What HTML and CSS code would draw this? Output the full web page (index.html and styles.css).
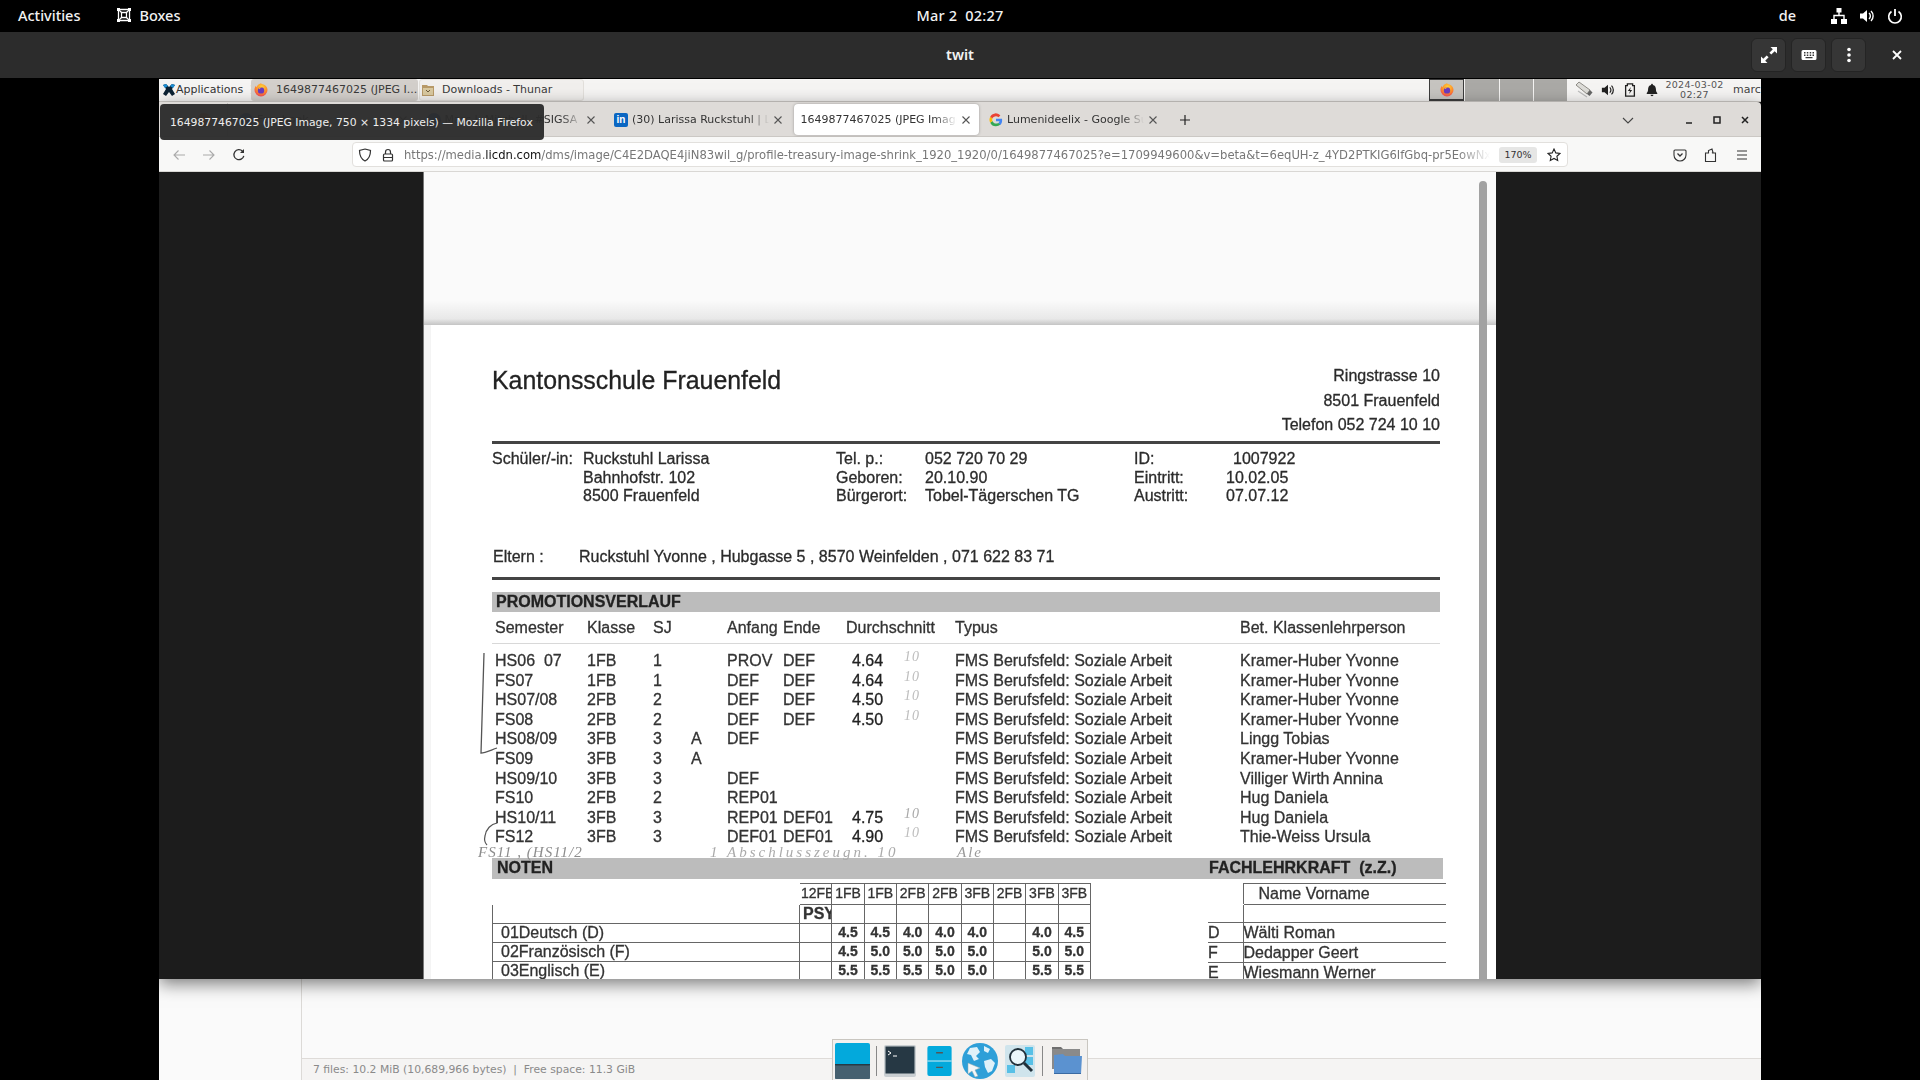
FILE: index.html
```html
<!DOCTYPE html>
<html lang="de">
<head>
<meta charset="utf-8">
<title>twit</title>
<link rel="stylesheet" href="styles.css">
</head>
<body>
<svg class="defs" width="0" height="0" aria-hidden="true">
  <defs>
    <radialGradient id="ffg" cx="0.55" cy="0.3" r="0.8">
      <stop offset="0" stop-color="#ffd83a"/><stop offset="0.55" stop-color="#ff8a2a"/><stop offset="1" stop-color="#f0306a"/>
    </radialGradient>
    <symbol id="ff" viewBox="0 0 16 16">
      <path d="M8 1.2c.4.9 1.4 1 2.6 1.3 1.9.6 3.9 2.6 3.9 5.5A6.5 6.5 0 0 1 1.500 8c0-1.700.5-3 1.300-4l.7 1.200C4 3.300 5.800 1.900 8 1.200z" fill="url(#ffg)"/>
      <circle cx="8" cy="8.400" r="3.200" fill="#6b3bbf"/>
      <path d="M5.300 6.500c1-1.600 3.400-1.700 4.600-.6-1.400-.3-2.700.1-3.100 1.200z" fill="#ffb13a"/>
    </symbol>
    <symbol id="close" viewBox="0 0 10 10"><path d="M1.500 1.500l7 7M8.500 1.500l-7 7" fill="none" stroke="currentColor" stroke-width="1.100"/></symbol>
  </defs>
</svg>

<header class="topbar">
  <div class="tb-left">
    <span class="tb-item">Activities</span>
    <span class="tb-item tb-app">
      <svg class="i16" viewBox="0 0 16 16"><path d="M2.500 2.500h11v11h-11z" fill="none" stroke="#fff" stroke-width="1.300"/><path d="M5.500 5.500h5v5h-5z" fill="none" stroke="#fff" stroke-width="1.300"/><path d="M2.500 2.500l3 3M13.500 2.500l-3 3M2.500 13.500l3-3M13.500 13.500l-3-3" stroke="#fff" stroke-width="1.200"/><path d="M1 1h3v3H1zM12 1h3v3h-3zM1 12h3v3H1zM12 12h3v3h-3z" fill="#fff"/></svg>
      Boxes
    </span>
  </div>
  <div class="tb-clock">Mar 2&nbsp; 02:27</div>
  <div class="tb-right">
    <span class="tb-lang">de</span>
    <svg class="i16" viewBox="0 0 16 16"><path d="M5.500 0h5v4.500h-5zM0 11h6v5H0zM10 11h6v5h-6z" fill="#fff"/><path d="M8 4v3.500M3 11V7.500h10V11" fill="none" stroke="#fff" stroke-width="1.400"/></svg>
    <svg class="i16" viewBox="0 0 16 16"><path d="M1 5.500h3L8 2v12L4 10.500H1z" fill="#fff"/><path d="M10 5a4 4 0 0 1 0 6M12 3a7 7 0 0 1 0 10" fill="none" stroke="#fff" stroke-width="1.400"/></svg>
    <svg class="i16" viewBox="0 0 16 16"><path d="M8 1v7" stroke="#fff" stroke-width="1.800" fill="none"/><path d="M4.500 3.500a6.300 6.300 0 1 0 7 0" fill="none" stroke="#fff" stroke-width="1.600"/></svg>
  </div>
</header>

<div class="titlebar">
  <div></div>
  <div class="tt-name">twit</div>
  <div class="tt-actions">
    <button class="tt-btn"><svg class="i16" viewBox="0 0 16 16"><path d="M9.500 0H16v6.500l-2.300-2.300-3.400 3.400-1.900-1.900 3.400-3.400zM6.500 16H0V9.500l2.300 2.300 3.400-3.400 1.900 1.900-3.400 3.400z" fill="#fff"/></svg></button>
    <button class="tt-btn"><svg class="i16" viewBox="0 0 16 16"><path fill-rule="evenodd" d="M2 3h12a1.500 1.500 0 0 1 1.500 1.500v7A1.500 1.500 0 0 1 14 13H2a1.500 1.500 0 0 1-1.500-1.500v-7A1.500 1.500 0 0 1 2 3zM3 5v1.500h1.500V5zM5.800 5v1.500h1.500V5zM8.700 5v1.500h1.500V5zM11.500 5v1.500H13V5zM3 7.500V9h1.500V7.500zM5.800 7.500V9h1.500V7.500zM8.700 7.500V9h1.500V7.500zM11.500 7.500V9H13V7.500zM4.500 10v1.200h7V10z" fill="#fff"/></svg></button>
    <button class="tt-btn"><svg class="i16" viewBox="0 0 16 16"><circle cx="8" cy="2.500" r="1.800" fill="#fff"/><circle cx="8" cy="8" r="1.800" fill="#fff"/><circle cx="8" cy="13.500" r="1.800" fill="#fff"/></svg></button>
    <span class="tt-close"><svg class="i10" viewBox="0 0 10 10"><path d="M1 1l8 8M9 1l-8 8" stroke="#fff" stroke-width="1.800" fill="none"/></svg></span>
  </div>
</div>

<main class="remote">
  <div class="panel">
    <div class="apps">
      <svg class="i14" viewBox="0 0 14 14"><path d="M1 2l3-1 3 3 3-3 3 1-3 4 3 5-3 2-3-4-3 4-3-2 3-5z" fill="#0c2233"/><path d="M1 2l3-1 2 2-3 2zM13 2l-3-1-2 2 3 2z" fill="#1c8fd6"/></svg>
      <span>Applications</span><span class="grip">⋮</span>
    </div>
    <div class="task task-on"><svg class="i16"><use href="#ff"/></svg><span>1649877467025 (JPEG I...</span></div>
    <div class="task task-off">
      <svg class="i14" viewBox="0 0 14 14"><path d="M1 2h5l1 1h6v10H1z" fill="#b89a68"/><path d="M2 5h10v7H2z" fill="#d9c9a0"/><path d="M5 7l2 2 2-2" fill="none" stroke="#6b5a3a"/></svg>
      <span>Downloads - Thunar</span>
    </div>
    <div class="panel-right">
      <div class="pager">
        <div class="pg pg-on"><svg class="i16"><use href="#ff"/></svg></div>
        <div class="pg"></div><div class="pg"></div><div class="pg"></div>
      </div>
      <div class="tray">
        <svg class="i18" viewBox="0 0 18 18"><path d="M1 4l3-3 11 8-3 4z" fill="#dddcd8" stroke="#77756f" stroke-width=".8"/><path d="M12 13l3-4 2.500 2.500-3 3.500z" fill="#666"/><path d="M3 10l9 6" stroke="#bbb" stroke-width="1.200"/></svg>
        <svg class="i14" viewBox="0 0 16 16"><path d="M1 5.500h3L8 2v12L4 10.500H1z" fill="#222"/><path d="M10 5a4 4 0 0 1 0 6M12 3a7 7 0 0 1 0 10" fill="none" stroke="#222" stroke-width="1.400"/></svg>
        <svg class="i14" viewBox="0 0 16 16"><path d="M5 1h6v2h2v12H3V3h2z" fill="none" stroke="#222" stroke-width="1.500"/><path d="M9 4.500L5.500 9H8l-1 3.500L10.500 8H8z" fill="#222"/></svg>
        <svg class="i14" viewBox="0 0 16 16"><path d="M8 1a1 1 0 0 1 1 1.200c2.500.6 3.500 2.600 3.500 5 0 2 .5 3.300 1.500 4.300v1H2v-1c1-1 1.500-2.300 1.500-4.300 0-2.400 1-4.400 3.500-5A1 1 0 0 1 8 1zM6.300 13.500h3.400a1.700 1.700 0 0 1-3.400 0z" fill="#222"/></svg>
      </div>
      <div class="pclock"><span>2024-03-02</span><span>02:27</span></div>
      <div class="puser">marc</div>
    </div>
  </div>

  <section class="firefox">
    <div class="tabstrip">
      <div class="tab-pin"><span class="pin-dot"></span></div>
      <div class="tab"><span class="fav fav-blue"></span><span class="tab-label">Facebook</span><svg class="i10 tab-x"><use href="#close"/></svg></div>
      <div class="tab"><span class="fav fav-blue"></span><span class="tab-label">Marc J. Mitchell &nbsp;#SIGSA</span><svg class="i10 tab-x"><use href="#close"/></svg></div>
      <div class="tab"><span class="fav fav-in">in</span><span class="tab-label">(30) Larissa Ruckstuhl | LinkedIn</span><svg class="i10 tab-x"><use href="#close"/></svg></div>
      <div class="tab tab-active"><span class="tab-label">1649877467025 (JPEG Image, 750 × 1334)</span><svg class="i10 tab-x"><use href="#close"/></svg></div>
      <div class="tab">
        <svg class="fav-g" viewBox="0 0 16 16"><path d="M15 8.200c0-.5 0-1-.1-1.500H8v2.800h4a3.400 3.400 0 0 1-1.500 2.200l2.400 1.900c1.400-1.300 2.100-3.200 2.100-5.400z" fill="#4285f4"/><path d="M8 15c2 0 3.600-.7 4.900-1.800l-2.400-1.900c-.7.500-1.500.7-2.500.7-1.900 0-3.500-1.300-4.100-3L1.400 11A7 7 0 0 0 8 15z" fill="#34a853"/><path d="M3.900 9a4.300 4.300 0 0 1 0-2.700L1.400 4.400a7 7 0 0 0 0 6.600z" fill="#fbbc05"/><path d="M8 3.800c1.100 0 2 .4 2.800 1.100L13 2.800A7 7 0 0 0 1.400 4.400l2.500 1.900c.6-1.300 2.200-2.500 4.100-2.500z" fill="#ea4335"/></svg>
        <span class="tab-label">Lumenideelix - Google Suche</span><svg class="i10 tab-x"><use href="#close"/></svg>
      </div>
      <svg class="i12 newtab" viewBox="0 0 12 12"><path d="M6 1v10M1 6h10" stroke="#222" stroke-width="1.200" fill="none"/></svg>
      <div class="win-ctl">
        <svg class="i12 chev" viewBox="0 0 12 12"><path d="M1 4l5 5 5-5" fill="none" stroke="#444" stroke-width="1.100"/></svg>
        <svg class="i10" viewBox="0 0 10 10"><path d="M2 8h6" stroke="#222" stroke-width="1.500"/></svg>
        <svg class="i10" viewBox="0 0 10 10"><path d="M2 2h6v6H2z" fill="none" stroke="#222" stroke-width="1.500"/></svg>
        <svg class="i10" viewBox="0 0 10 10"><path d="M2 2l6 6M8 2l-6 6" stroke="#222" stroke-width="1.500" fill="none"/></svg>
      </div>
    </div>

    <div class="tooltip">1649877467025 (JPEG Image, 750 × 1334 pixels) — Mozilla Firefox</div>

    <div class="toolbar">
      <div class="nav">
        <svg class="i14" viewBox="0 0 14 14"><path d="M13 7H2M6.500 2.500L2 7l4.500 4.500" fill="none" stroke="#aaa" stroke-width="1.100"/></svg>
        <svg class="i14" viewBox="0 0 14 14"><path d="M1 7h11M7.500 2.500L12 7l-4.500 4.500" fill="none" stroke="#aaa" stroke-width="1.100"/></svg>
        <svg class="i14" viewBox="0 0 14 14"><path d="M11.800 7.800A5 5 0 1 1 10.500 3.200" fill="none" stroke="#333" stroke-width="1.300"/><path d="M12 1v4H8z" fill="#333"/></svg>
      </div>
      <div class="urlbar">
        <svg class="i14" viewBox="0 0 14 14"><path d="M7 1l5.500 1.500c0 5-1.500 8.500-5.500 10.500C3 11 1.500 7.500 1.500 2.500z" fill="none" stroke="#333" stroke-width="1.200"/></svg>
        <svg class="i14" viewBox="0 0 14 14"><path d="M4.500 6V4a2.500 2.500 0 0 1 5 0v2" fill="none" stroke="#333" stroke-width="1.200"/><rect x="2.500" y="6" width="9" height="7" rx="1" fill="none" stroke="#333" stroke-width="1.200"/><path d="M3 9.500h8" stroke="#333"/></svg>
        <div class="url">https://media.<b>licdn.com</b>/dms/image/C4E2DAQE4jiN83wil_g/profile-treasury-image-shrink_1920_1920/0/1649877467025?e=1709949600&amp;v=beta&amp;t=6eqUH-z_4YD2PTKIG6IfGbq-pr5EowNxHqT</div>
        <span class="zoom">170%</span>
        <svg class="i14" viewBox="0 0 14 14"><path d="M7 1l1.800 3.900 4.200.5-3.100 2.900.8 4.200L7 10.400l-3.700 2.100.8-4.200L1 5.400l4.200-.5z" fill="none" stroke="#222" stroke-width="1.100"/></svg>
      </div>
      <div class="tools">
        <svg class="i14" viewBox="0 0 14 14"><path d="M2 2h10a1 1 0 0 1 1 1v4a6 6 0 0 1-12 0V3a1 1 0 0 1 1-1z" fill="none" stroke="#333" stroke-width="1.100"/><path d="M4.500 5.500L7 8l2.500-2.500" fill="none" stroke="#333" stroke-width="1.300"/></svg>
        <svg class="i14" viewBox="0 0 14 14"><path d="M1.500 5h3V2.500L8 1l1 3.500-1 .5h3.500v8.500h-10z" fill="none" stroke="#333" stroke-width="1.100"/></svg>
        <svg class="i14" viewBox="0 0 14 14"><path d="M2 3h10M2 7h10M2 11h10" stroke="#333" stroke-width="1.100" fill="none"/></svg>
      </div>
    </div>

    <div class="viewer">
      <div class="doc">
        <div class="doc-top"></div>
        <div class="paper">
          <div class="letterhead">
            <div class="lh-title">Kantonsschule Frauenfeld</div>
            <div class="lh-addr"><div>Ringstrasse 10</div><div>8501 Frauenfeld</div><div>Telefon 052 724 10 10</div></div>
          </div>
          <div class="rule"></div>
          <div class="info">
            <span>Schüler/-in:</span><span>Ruckstuhl Larissa</span><span>Tel. p.:</span><span>052 720 70 29</span><span>ID:</span><span class="id-val">1007922</span>
            <span></span><span>Bahnhofstr. 102</span><span>Geboren:</span><span>20.10.90</span><span>Eintritt:</span><span>10.02.05</span>
            <span></span><span>8500 Frauenfeld</span><span>Bürgerort:</span><span>Tobel-Tägerschen TG</span><span>Austritt:</span><span>07.07.12</span>
          </div>
          <div class="eltern"><span>Eltern :</span><span>Ruckstuhl Yvonne , Hubgasse 5 , 8570 Weinfelden , 071 622 83 71</span></div>
          <div class="rule rule-2"></div>
          <div class="bar bar-1">PROMOTIONSVERLAUF</div>

          <div class="row row-head"><span>Semester</span><span>Klasse</span><span>SJ</span><span></span><span>Anfang</span><span>Ende</span><span class="span2">Durchschnitt</span><span>Typus</span><span>Bet. Klassenlehrperson</span></div>
          <div class="faint"></div>
          <div class="rows">
            <div class="row"><span>HS06&nbsp; 07</span><span>1FB</span><span>1</span><span></span><span>PROV</span><span>DEF</span><b class="avg">4.64</b><i class="hw">10</i><span>FMS Berufsfeld: Soziale Arbeit</span><span>Kramer-Huber Yvonne</span></div>
            <div class="row"><span>FS07</span><span>1FB</span><span>1</span><span></span><span>DEF</span><span>DEF</span><b class="avg">4.64</b><i class="hw">10</i><span>FMS Berufsfeld: Soziale Arbeit</span><span>Kramer-Huber Yvonne</span></div>
            <div class="row"><span>HS07/08</span><span>2FB</span><span>2</span><span></span><span>DEF</span><span>DEF</span><b class="avg">4.50</b><i class="hw">10</i><span>FMS Berufsfeld: Soziale Arbeit</span><span>Kramer-Huber Yvonne</span></div>
            <div class="row"><span>FS08</span><span>2FB</span><span>2</span><span></span><span>DEF</span><span>DEF</span><b class="avg">4.50</b><i class="hw">10</i><span>FMS Berufsfeld: Soziale Arbeit</span><span>Kramer-Huber Yvonne</span></div>
            <div class="row"><span>HS08/09</span><span>3FB</span><span>3</span><span>A</span><span>DEF</span><span></span><span class="avg"></span><i class="hw"></i><span>FMS Berufsfeld: Soziale Arbeit</span><span>Lingg Tobias</span></div>
            <div class="row"><span>FS09</span><span>3FB</span><span>3</span><span>A</span><span></span><span></span><span class="avg"></span><i class="hw"></i><span>FMS Berufsfeld: Soziale Arbeit</span><span>Kramer-Huber Yvonne</span></div>
            <div class="row"><span>HS09/10</span><span>3FB</span><span>3</span><span></span><span>DEF</span><span></span><span class="avg"></span><i class="hw"></i><span>FMS Berufsfeld: Soziale Arbeit</span><span>Villiger Wirth Annina</span></div>
            <div class="row"><span>FS10</span><span>2FB</span><span>2</span><span></span><span>REP01</span><span></span><span class="avg"></span><i class="hw"></i><span>FMS Berufsfeld: Soziale Arbeit</span><span>Hug Daniela</span></div>
            <div class="row"><span>HS10/11</span><span>3FB</span><span>3</span><span></span><span>REP01</span><span>DEF01</span><b class="avg">4.75</b><i class="hw hw-b">10</i><span>FMS Berufsfeld: Soziale Arbeit</span><span>Hug Daniela</span></div>
            <div class="row"><span>FS12</span><span>3FB</span><span>3</span><span></span><span>DEF01</span><span>DEF01</span><b class="avg">4.90</b><i class="hw">10</i><span>FMS Berufsfeld: Soziale Arbeit</span><span>Thie-Weiss Ursula</span></div>
          </div>
          <div class="scrawl"><i>FS11 , (HS11/2</i><i>1 Abschlusszeugn. 10</i><i>Ale</i></div>
          <div class="bar bar-2"><span>NOTEN</span><span class="fl">FACHLEHRKRAFT&nbsp; (z.Z.)</span></div>

          <div class="tables">
            <table class="grades">
              <colgroup><col class="c-name"><col><col><col><col><col><col><col><col><col></colgroup>
              <tr class="h21"><td class="none"></td><td class="clip">12FB</td><td>1FB</td><td>1FB</td><td>2FB</td><td>2FB</td><td>3FB</td><td>2FB</td><td>3FB</td><td>3FB</td></tr>
              <tr><td></td><td class="clip psy"><b>PSY</b></td><td></td><td></td><td></td><td></td><td></td><td></td><td></td><td></td></tr>
              <tr><td class="subj">01Deutsch (D)</td><td></td><td><b>4.5</b></td><td><b>4.5</b></td><td><b>4.0</b></td><td><b>4.0</b></td><td><b>4.0</b></td><td></td><td><b>4.0</b></td><td><b>4.5</b></td></tr>
              <tr><td class="subj">02Französisch (F)</td><td></td><td><b>4.5</b></td><td><b>5.0</b></td><td><b>5.0</b></td><td><b>5.0</b></td><td><b>5.0</b></td><td></td><td><b>5.0</b></td><td><b>5.0</b></td></tr>
              <tr><td class="subj">03Englisch (E)</td><td></td><td><b>5.5</b></td><td><b>5.5</b></td><td><b>5.5</b></td><td><b>5.0</b></td><td><b>5.0</b></td><td></td><td><b>5.5</b></td><td><b>5.5</b></td></tr>
            </table>
            <table class="teachers">
              <colgroup><col class="c-k"><col></colgroup>
              <tr class="h21"><td class="none"></td><td class="tname">Name Vorname</td></tr>
              <tr class="h18"><td></td><td></td></tr>
              <tr class="h20"><td>D</td><td>Wälti Roman</td></tr>
              <tr class="h20"><td>F</td><td>Dedapper Geert</td></tr>
              <tr class="h20"><td>E</td><td>Wiesmann Werner</td></tr>
            </table>
          </div>
        </div>
        <svg class="marks" viewBox="0 0 1073 807" aria-hidden="true">
          <path d="M60 481L57 581c4 0 10-3 16-5" fill="none" stroke="#555" stroke-width="1.300"/>
          <path d="M73 651c-6 1-11 6-12 13-1 4 0 7 2 9" fill="none" stroke="#555" stroke-width="1.200"/>
        </svg>
        <div class="scrollstrip"></div>
      </div>
    </div>
  </section>

  <section class="thunar">
    <div class="th-side"></div>
    <div class="th-main">
      <div class="th-files"></div>
      <div class="th-status">7 files: 10.2 MiB (10,689,966 bytes) &nbsp;|&nbsp; Free space: 11.3 GiB</div>
    </div>
    <div class="dock">
      <svg class="d-tile" viewBox="0 0 35 36"><rect width="35" height="36" rx="2" fill="#03a9dc"/><rect y="22" width="35" height="14" rx="1" fill="#46606f"/><rect y="21" width="35" height="1.500" fill="#263a46"/></svg>
      <span class="d-sep"></span>
      <svg class="d-term" viewBox="0 0 32 32"><rect width="32" height="32" rx="2" fill="#c9ced1"/><rect x="1.500" y="1.500" width="29" height="27" fill="#263844"/><path d="M4 6l3 2-3 2" fill="none" stroke="#fff" stroke-width="1"/><path d="M9 11h4" stroke="#fff"/></svg>
      <svg class="d-cab" viewBox="0 0 25 32"><rect width="25" height="31" rx="2" fill="#03a9dc"/><path d="M0 15.500h25" stroke="#d8eef6" stroke-width="1"/><path d="M9 7h7M9 22h7" stroke="#555" stroke-width="1.400"/></svg>
      <svg class="d-globe" viewBox="0 0 36 36"><circle cx="18" cy="18" r="18" fill="#2e9fd8"/><path d="M8 5l7-1 3 5-4 4 3 3-5 2-3-6-4-1zM22 18l7-2 4 4-3 8-4 2-3-6zM22 3l6 3-2 4-4-2z" fill="#dff1f9"/><path d="M6 20l12 5-5 2 3 6-3 1-3-6-4 3z" fill="#f4f6f7" stroke="#9aa" stroke-width=".5"/></svg>
      <svg class="d-find" viewBox="0 0 30 32"><rect width="30" height="32" rx="2" fill="#cfe4ec"/><path d="M20 2h8v8h-8zM2 20h8v8H2zM20 12h8v8h-8z" fill="#58c0e6"/><circle cx="13" cy="12" r="8" fill="#eaf7fb" stroke="#20303a" stroke-width="1.800"/><path d="M19 18l8 8" stroke="#20303a" stroke-width="3"/></svg>
      <span class="d-sep"></span>
      <svg class="d-folder" viewBox="0 0 32 30"><path d="M1 1h9l2 2h12v8H1z" fill="#6f6f6f"/><path d="M1 3h28v20H1z" fill="#8a8a8a"/><path d="M3 9l9-1 2 2h17l-1 18H3z" fill="#5b92d0"/><path d="M3 27h27v1H3z" fill="#3a6aa2"/></svg>
    </div>
  </section>
</main>
</body>
</html>
```

FILE: styles.css
```css
* { box-sizing: border-box; }
html, body { margin: 0; padding: 0; }
body {
  width: 1920px; height: 1080px; overflow: hidden;
  background: #000; display: flex; flex-direction: column;
  font-family: "DejaVu Sans", sans-serif;
}
.defs { position: absolute; }
svg { flex: none; display: block; }
.i10 { width: 10px; height: 10px; }
.i12 { width: 12px; height: 12px; }
.i14 { width: 14px; height: 14px; }
.i16 { width: 16px; height: 16px; }
.i18 { width: 18px; height: 18px; }

/* GNOME top bar */
.topbar {
  height: 32px; flex: none; background: #000; color: #f2f2f2; padding-bottom: 2px;
  display: grid; grid-template-columns: 1fr auto 1fr; align-items: center;
  font: 500 14.5px "Noto Sans", sans-serif;
}
.tb-left { display: flex; align-items: center; gap: 36px; padding-left: 18px; }
.tb-item { display: flex; align-items: center; gap: 7px; }
.tb-clock { letter-spacing: .2px; }
.tb-right { display: flex; align-items: center; justify-content: flex-end; padding-right: 17px; gap: 12px; margin-top: 2px; }
.tb-lang { margin-right: 23px; margin-top: -2px; }

/* Boxes title bar */
.titlebar {
  height: 46px; flex: none; background: #2c2c2c; color: #f2f2f2;
  display: grid; grid-template-columns: 1fr auto 1fr; align-items: center;
  font: 600 14.5px "Noto Sans", sans-serif;
}
.tt-name { margin-bottom: 2px; }
.tt-actions { display: flex; justify-content: flex-end; align-items: center; gap: 5px; padding-right: 5px; }
.tt-btn {
  width: 35px; height: 34px; padding: 0; background: #363636; border: 1px solid #242424; border-radius: 6px;
  display: flex; align-items: center; justify-content: center;
}
.tt-close { width: 36px; margin-left: 8px; display: flex; justify-content: center; }

/* Remote desktop */
.remote {
  width: 1602px; height: 1002px; margin-left: 159px; padding-top: 1px; flex: none;
  display: flex; flex-direction: column; overflow: hidden; background: #000;
}

/* XFCE panel */
.panel {
  height: 23px; flex: none; display: flex; align-items: stretch; background: #f5f4f3;
  border-bottom: 1px solid #cfccc8; font-size: 11px; color: #3a3a3a; padding: 0 0 0 3px;
}
.apps { width: 89px; display: flex; align-items: center; gap: 0; color: #333; padding-bottom: 1px; }
.grip { color: #888; margin-left: 3px; }
.task { width: 167px; display: flex; align-items: center; border-radius: 3px; margin-right: 1px; white-space: nowrap; padding-bottom: 1px; }
.task-on { background: #d3cfcb; padding-left: 2px; gap: 7px; }
.task-off { background: #f1efed; border: 1px solid #e2dfdb; padding-left: 1px; gap: 7px; width: 165px; }
.panel-right { margin-left: auto; display: flex; align-items: stretch; }
.pager { display: flex; gap: 1px; width: 138px; }
.pg { flex: 1; background: #aaa9a6; }
.pg-on { background: #c6c4c0; border: 1px solid #3c3c3c; border-bottom-width: 2px; display: flex; align-items: center; justify-content: center; }
.tray { display: flex; align-items: center; gap: 8px; margin-left: 8px; width: 80px; }
.tray .i14 { width: 14px; }
.pclock { width: 78px; margin-left: 0; display: flex; flex-direction: column; align-items: center; font-size: 9.500px; line-height: 10px; justify-content: center; color: #555; letter-spacing: .3px; padding-left: 1px; }
.puser { width: 28px; overflow: hidden; display: flex; align-items: center; color: #444; padding-bottom: 1px; }

/* Firefox */
.firefox {
  height: 877px; flex: none; display: flex; flex-direction: column; position: relative; z-index: 2;
  box-shadow: 0 5px 16px rgba(0,0,0,.5); background: #1c1c1c;
}
.tabstrip {
  height: 35px; flex: none; background: #dedbd8; border-bottom: 1px solid #cbc8c4; display: flex; align-items: center;
  font-size: 11px; color: #333; border-radius: 0 4px 0 0; padding-top: 1px;
}
.tab-pin { width: 69px; height: 100%; border-right: 1px solid #c3c0bc; display: flex; align-items: center; justify-content: flex-end; padding-right: 16px; }
.pin-dot { width: 14px; height: 14px; border-radius: 50%; background: #e0763a; }
.tab {
  width: 185px; height: 31px; margin-right: 2.500px; padding: 0 8px; display: flex; align-items: center; gap: 4px; border-radius: 4px; flex: none;
}
.tab-pin + .tab { margin-left: 3px; }
.tab-active { background: #fff; box-shadow: 0 0 3px rgba(0,0,0,.3); padding-left: 7px; }
.tab-label {
  flex: 1; min-width: 0; white-space: nowrap; overflow: hidden;
  -webkit-mask-image: linear-gradient(90deg, #000 85%, transparent 100%);
  mask-image: linear-gradient(90deg, #000 85%, transparent 100%);
}
.tab-x { color: #555; }
.fav { width: 14px; height: 14px; flex: none; border-radius: 50%; }
.fav-blue { background: #1f66c8; }
.fav-in { background: #0a66c2; border-radius: 2px; color: #fff; font: 700 10px/14px "Liberation Sans", sans-serif; text-align: center; }
.fav-g { width: 14px; height: 14px; }
.newtab { margin-left: 10px; }
.win-ctl { margin-left: auto; display: flex; align-items: center; gap: 18px; padding-right: 11px; }
.chev { margin-right: 32px; }

.tooltip {
  position: absolute; left: 1px; top: 2px; width: 384px; height: 36px; padding-left: 10px;
  display: flex; align-items: center; white-space: nowrap; border-radius: 4px;
  background: rgba(44,44,44,.96); color: #eee; font-size: 10.800px; z-index: 5;
}

.toolbar {
  height: 35px; flex: none; background: #f8f8f7; display: flex; align-items: center; padding-top: 1px;
  border-bottom: 1px solid #d9d7d4; font-size: 11.600px;
}
.nav { display: flex; gap: 16px; padding-left: 13px; width: 193px; }
.urlbar {
  width: 1216px; height: 25px; background: #fff; border: 1px solid #e2e0dd; border-radius: 4px;
  display: flex; align-items: center; padding: 0 6px 0 5px; gap: 9px;
}
.url {
  flex: 1; min-width: 0; white-space: nowrap; overflow: hidden; color: #777; margin-left: 0;
  -webkit-mask-image: linear-gradient(90deg, #000 97%, transparent 100%);
  mask-image: linear-gradient(90deg, #000 97%, transparent 100%);
}
.url b { font-weight: 400; color: #111; }
.zoom { width: 38px; height: 16px; background: #e6e6e5; border-radius: 3px; font-size: 9.500px; line-height: 16px; text-align: center; color: #333; flex: none; margin-right: 1px; }
.tools { display: flex; gap: 17px; margin-left: 105px; }

/* Image viewer */
.viewer { height: 807px; flex: none; background: #1c1c1c; display: flex; justify-content: center; padding-right: 1px; }
.doc { width: 1073px; height: 807px; overflow: hidden; background: #fff; position: relative; border-left: 1px solid #777; }
.doc-top {
  height: 153px;
  background: linear-gradient(#fafafa 84%, #e8e8e8 96%, #c4c4c4 100%);
}
.paper {
  width: 1016px; color: #2b2b2b; filter: blur(.65px); -webkit-text-stroke: .3px currentColor;
  font: 400 16px/20px "Liberation Sans", sans-serif; border-left: 7px solid #f4f4f4;
  padding-left: 61px;
}
.letterhead { display: flex; justify-content: space-between; padding-top: 39px; height: 113px; }
.lh-title { font-size: 24.900px; line-height: 32px; color: #222; }
.lh-addr { text-align: right; line-height: 24.700px; }
.rule { height: 3px; background: #444; margin-top: 3px; }
.info {
  display: grid; grid-template-columns: 91px 253px 89px 209px 92px 1fr; grid-auto-rows: 18.500px;
  line-height: 18.500px; margin-top: 6px;
}
.id-val { padding-left: 7px; }
.eltern { display: grid; grid-template-columns: 86px 1fr; margin-top: 41.500px; height: 20px; padding-left: 1px; }
.rule-2 { margin-top: 10px; }
.bar { background: #bcbcbc; font-weight: 700; color: #222; display: grid; align-items: center; }
.bar-1 { height: 20px; margin-top: 12px; padding-left: 4px; }
.row {
  display: grid; grid-template-columns: 92px 66px 38px 36px 56px 63px 50px 59px 285px 1fr;
  height: 19.600px; line-height: 19.600px; padding-left: 3px; white-space: nowrap; color: #333;
}
.row-head { height: 20px; margin-top: 6px; }
.span2 { grid-column: span 2; }
.avg { padding-left: 6px; font-weight: 400; color: #222; }
.hw {
  font: italic 14px/11px "Liberation Serif", serif; color: #bdbdbd; padding-left: 8px; height: 12px;
  -webkit-text-stroke: 0; letter-spacing: 1px;
}
.hw-b { color: #a8a8a8; }
.faint { height: 1px; background: #d8d8d8; margin-top: 5px; }
.rows { margin-top: 7px; }
.scrawl {
  height: 11px; margin-left: -14px; display: flex; overflow: visible;
  font: italic 15px/11px "Liberation Serif", serif; color: #8c8c8c; white-space: nowrap; -webkit-text-stroke: 0;
}
.scrawl i:nth-child(1) { width: 232px; letter-spacing: 1px; }
.scrawl i:nth-child(2) { width: 247px; letter-spacing: 3px; color: #aaa; }
.scrawl i:nth-child(3) { letter-spacing: 2px; color: #999; }
.bar-2 { height: 21px; grid-template-columns: 717px 1fr; padding-left: 5px; margin-right: -3px; }
.bar-2 .fl { margin-left: -5px; }
.tables { display: flex; gap: 117px; margin-top: 4px; align-items: flex-start; }
table { border-collapse: collapse; table-layout: fixed; font-size: 14px; color: #333; }
td { border: 1px solid #666; padding: 0; height: 19px; line-height: 17px; overflow: hidden; white-space: nowrap; }
.h21 td { height: 21px; }
.h18 td { height: 18px; }
.h20 td { height: 20px; font-size: 16px; }
td.none { border-color: transparent; border-top: 0; border-left: 0; }
.grades { width: 599px; flex: none; }
.grades td { text-align: center; }
.grades .c-name { width: 307px; }
.grades td.subj { text-align: left; font-size: 16px; padding-left: 8px; }
.grades td.clip { text-align: left; padding-left: 1px; }
.grades td.psy { font-size: 16px; padding-left: 3px; }
.teachers { width: 238px; flex: none; }
.teachers .c-k { width: 35px; }
.teachers td { border-left: 0; border-right: 0; }
.teachers td + td { border-left: 1px solid #666; font-size: 16px; }
.teachers td.tname { padding-left: 15px; font-size: 16px; }
.marks { position: absolute; left: 0; top: 0; width: 1073px; height: 807px; filter: blur(.4px); pointer-events: none; }
.scrollstrip { position: absolute; right: 9px; top: 9px; bottom: 0; width: 8px; border-radius: 4px 4px 0 0; background: #a2a2a2; filter: blur(.6px); }

/* Thunar behind */
.thunar { flex: 1; min-height: 0; display: flex; position: relative; background: #fafafa; }
.th-side { width: 143px; flex: none; border-right: 1px solid #dcdad7; }
.th-main { flex: 1; display: flex; flex-direction: column; }
.th-files { flex: 1; }
.th-status {
  height: 22px; flex: none; background: #f5f4f3; border-top: 1px solid #dedbd8; padding-left: 11px;
  font-size: 10.800px; line-height: 21px; color: #8a8a8a;
}
.dock {
  position: absolute; left: 673px; bottom: 0; width: 256px; height: 41px; z-index: 3;
  background: #f3f1ef; border: 1px solid #c9c6c0; border-bottom: 0;
  display: flex; align-items: center; padding: 2px 0 0 2px;
}
.d-tile { width: 35px; height: 36px; }
.d-sep { width: 1px; height: 30px; background: #888; }
.d-tile + .d-sep { margin: 0 7px 0 6px; }
.d-term { width: 32px; height: 32px; margin-right: 11px; }
.d-cab { width: 25px; height: 31px; margin-right: 10px; }
.d-globe { width: 36px; height: 36px; margin-right: 7px; }
.d-find { width: 30px; height: 32px; margin-right: 7px; }
.d-find + .d-sep { margin-right: 8px; }
.d-folder { width: 32px; height: 30px; }
```
